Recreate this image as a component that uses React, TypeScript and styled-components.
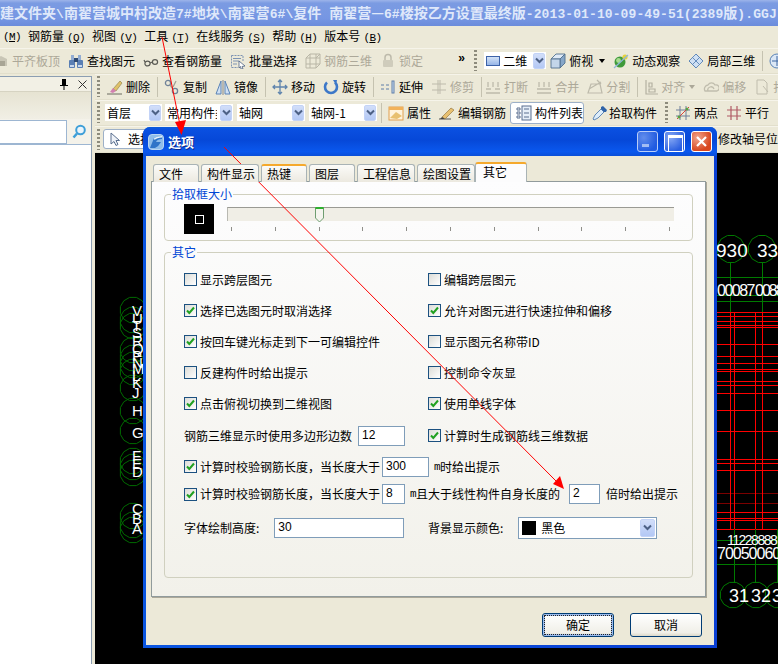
import React from "react";
import styled, { createGlobalStyle, css } from "styled-components";

const CJK = `"Noto Sans CJK SC", "Liberation Sans", sans-serif`;
const MONO = `"Liberation Mono", "Noto Sans CJK SC", monospace`;

const GlobalStyle = createGlobalStyle`
  html, body {
    margin: 0;
    padding: 0;
    overflow: hidden;
    background: #000;
  }
  * { box-sizing: border-box; }
`;

const icons: Record<string, React.ReactNode> = {
  level: (
    <>
      <path d="M2 13 L2 6 L8 3 L14 6 L14 13 Z" fill="#c9c6b6" />
      <rect x="4" y="8" width="8" height="5" fill="#a8a595" />
    </>
  ),
  find: (
    <>
      <rect x="1" y="7" width="6" height="8" rx="1" fill="#5a7fb4" />
      <rect x="9" y="7" width="6" height="8" rx="1" fill="#5a7fb4" />
      <rect x="3" y="2" width="3" height="5" fill="#93add3" />
      <rect x="10" y="2" width="3" height="5" fill="#93add3" />
      <rect x="6" y="5" width="4" height="4" fill="#2f4a73" />
      <rect x="2" y="12" width="4" height="2" fill="#c9d8ee" />
      <rect x="10" y="12" width="4" height="2" fill="#c9d8ee" />
    </>
  ),
  glasses: (
    <g fill="none" stroke="#5b5b55" strokeWidth="1.2">
      <ellipse cx="4.5" cy="10.5" rx="2.6" ry="2.4" />
      <ellipse cx="12" cy="9" rx="2.6" ry="2.4" />
      <path d="M7 10 L9.5 9 M2 9 L1 7" />
    </g>
  ),
  batch: (
    <g fill="none">
      <path d="M1.5 2.5 H13 V8 M1.5 2.5 V14.5 H8" stroke="#7d93b3" strokeDasharray="2 1" />
      <path d="M3 5.5 H11 M3 8 H9 M3 11 H7" stroke="#7d93b3" />
      <path d="M9 8 L15 13 L12 13.5 L13 16 L11 16 L10.5 13.5 L9 15 Z" fill="#fff" stroke="#4b5f80" strokeWidth="0.8" />
    </g>
  ),
  rebar3d: (
    <g fill="none" stroke="#b9b6a6">
      <path d="M1 5 H15 M1 11 H15 M5 1 V15 M11 1 V15 M1 5 L5 1 H15 L11 5 M1 11 V5 M15 1 V11 L11 15 H1 V11" />
    </g>
  ),
  lock: (
    <g>
      <path d="M5 7 V4.5 A3 3 0 0 1 11 4.5 V7" fill="none" stroke="#bdbaab" strokeWidth="1.5" />
      <rect x="3" y="7" width="10" height="7" rx="1" fill="#cfccbc" />
    </g>
  ),
  cube: (
    <g stroke="#50708f" strokeWidth="0.9">
      <path d="M1 6 L6 1 H15 L10 6 Z" fill="#dfeaf6" />
      <path d="M10 6 L15 1 V10 L10 15 Z" fill="#86a6c8" />
      <path d="M1 6 H10 V15 H1 Z" fill="#c3d6ea" />
    </g>
  ),
  orbit: (
    <g>
      <circle cx="7" cy="9" r="5.5" fill="#3f9a3a" />
      <circle cx="5.5" cy="7.5" r="2.4" fill="#a8dc8f" />
      <circle cx="12" cy="4" r="2.6" fill="#e6d23a" />
      <path d="M1 15 L15 2" stroke="#8fb4d8" strokeWidth="1.2" />
    </g>
  ),
  partial: (
    <g stroke="#5a83b6" strokeWidth="0.9">
      <path d="M1 8 L8 1 L15 8 L8 15 Z" fill="#cfe0f3" />
      <path d="M4.5 4.5 L11.5 11.5 M8 1 L15 8 M4.5 11.5 L11.5 4.5 M1 8 L8 15" fill="none" />
    </g>
  ),
  globe: (
    <g fill="none" stroke="#5a83b6">
      <circle cx="8" cy="8" r="7" fill="#dbe7f5" />
      <path d="M8 3 V13 M3 8 H13" stroke="#3a64a0" />
    </g>
  ),
  erase: (
    <g>
      <path d="M0 15 H15" stroke="#6b6b60" />
      <path d="M6 10 L13 2 L15 4 L9 12 Z" fill="#e0c26a" stroke="#8a7a44" strokeWidth="0.6" />
      <path d="M3 13 L6 9 L9 12 L6 14 Z" fill="#d27fb0" />
    </g>
  ),
  copy: (
    <g fill="none" stroke="#6f8299" strokeWidth="1.3">
      <circle cx="4" cy="4" r="2.6" />
      <circle cx="11" cy="12" r="2.6" />
      <path d="M6 6 L9 10 M12 2 L9 8" stroke="#a0a094" />
    </g>
  ),
  mirror: (
    <g stroke="#5a83b6" fill="#cfe0f3">
      <path d="M6 2 L6 15 L1 15 Z" />
      <path d="M10 2 L10 15 L15 15 Z" />
      <path d="M8 1 V16" stroke="#888" fill="none" />
    </g>
  ),
  move: (
    <g fill="none" stroke="#5f84ad" strokeWidth="1.3">
      <path d="M8 1 V15 M1 8 H15 M6 3 L8 1 L10 3 M6 13 L8 15 L10 13 M3 6 L1 8 L3 10 M13 6 L15 8 L13 10" />
    </g>
  ),
  rotate: (
    <g fill="none">
      <path d="M4 3.5 A6 6 0 1 0 12 3.5" stroke="#3d78c8" strokeWidth="2.6" />
      <path d="M10 1 L14 1 L13 6 Z" fill="#3d78c8" />
    </g>
  ),
  extend: (
    <g fill="none" stroke="#5f7fa8">
      <path d="M1 6 H4 M6 6 H9 M1 10 H4 M6 10 H9" />
      <rect x="12" y="2" width="2" height="12" fill="#cfe0f3" />
    </g>
  ),
  trim: <path d="M1 5 H15 M1 11 H15 M7 1 V15 M9 1 V15" fill="none" stroke="#bdbaab" />,
  breakLine: <path d="M1 10 H6 M10 10 H15 M1 14 H15 M3 3 V8 M8 3 V8 M13 3 V8" fill="none" stroke="#bdbaab" strokeWidth="1.3" />,
  merge: <path d="M1 10 H15 M1 14 H15 M3 3 V8 M8 3 V8 M13 3 V8" fill="none" stroke="#bdbaab" strokeWidth="1.3" />,
  split: <path d="M1 14 H15 L13 5 H4 Z M2 10 L14 3 M10 1 L14 5" fill="none" stroke="#bdbaab" strokeWidth="1.2" />,
  align: <path d="M2 1 V15 H14 M5 4 H8 V8 H5 Z M5 10 H11 V13 H5 Z" fill="none" stroke="#b4b1a1" strokeWidth="1.2" />,
  offset: <path d="M2 12 A4 4 0 0 1 5 6 A4 4 0 0 1 12 6 A3 3 0 0 1 14 12 Z M5 12 A3 3 0 0 1 11 10" fill="none" stroke="#c0bdad" strokeWidth="1.3" />,
  page: <path d="M3 1 H10 L13 4 V15 H3 Z M9 7 L14 13" fill="none" stroke="#c0bdad" />,
  props: (
    <g>
      <rect x="1" y="2" width="14" height="13" fill="#fff3dc" stroke="#e0a050" />
      <rect x="1" y="2" width="14" height="3" fill="#f2b25a" />
      <path d="M2 13 L8 7 L14 11 L9 14 Z" fill="#e8c070" />
    </g>
  ),
  pencil: (
    <g>
      <path d="M0 14 H12" stroke="#555" />
      <path d="M3 12 L12 3 L15 5 L6 14 Z" fill="#e8c070" stroke="#8a6a34" strokeWidth="0.6" />
      <path d="M3 12 L6 14 L1 14 Z" fill="#444" />
    </g>
  ),
  list: (
    <g>
      <rect x="6" y="1" width="9" height="14" fill="#e6eef8" stroke="#5a6f8f" />
      <path d="M8 4 H13 M8 8 H13 M8 12 H13" stroke="#5a6f8f" />
      <path d="M1 3 H4 V5 H1 Z M1 7 H4 V9 H1 Z M1 11 H4 V13 H1 Z" fill="none" stroke="#5a6f8f" />
    </g>
  ),
  dropper: (
    <g>
      <path d="M3 10 L9 4 L12 7 L6 13 L2 15 L1 14 Z" fill="#dcecfa" stroke="#3f6fa8" strokeWidth="0.8" />
      <path d="M9 2 L11 1 L15 5 L14 7 L12 7 L9 4 Z" fill="#2f63a8" />
    </g>
  ),
  twoPoint: (
    <g fill="none">
      <path d="M1 5 H15 M1 11 H15 M5 1 V15 M11 1 V15" stroke="#6f7f9a" />
      <path d="M2 14 L14 2" stroke="#d8443a" />
      <circle cx="4" cy="12" r="1.5" fill="#5aa040" />
      <circle cx="12" cy="4" r="1.5" fill="#5aa040" />
    </g>
  ),
  parallel: <path d="M1 5 H15 M1 11 H15 M5 1 V15 M11 1 V15" fill="none" stroke="#b05a64" strokeWidth="1.2" />,
};

const Glyph = styled.svg`
  flex: none;
  display: block;
  width: 16px;
  height: 16px;
`;

function Icon({ name }: { name: string }) {
  return <Glyph viewBox="0 0 16 16">{icons[name]}</Glyph>;
}

const Shell = styled.div`
  position: relative;
  width: 778px;
  height: 664px;
  overflow: hidden;
  display: flex;
  flex-direction: column;
  background: #ece9d8;
  font: 12px/16px ${CJK};
  color: #000;
`;

const TitleBar = styled.div`
  flex: none;
  height: 26px;
  padding: 3px 0 0 0;
  background: linear-gradient(#9db4ea 0, #7b9be2 12%, #7696e3 70%, #6b8cdb 100%);
  color: #dfe8fa;
  font: bold 14px/18px ${CJK};
  white-space: pre;
  overflow: hidden;
`;

const TitleAscii = styled.span`
  font: bold 13px/18px ${MONO};
  letter-spacing: 0.1px;
`;

const titleText =
  "建文件夹\\南翟营城中村改造7#地块\\南翟营6#\\复件 南翟营—6#楼按乙方设置最终版-2013-01-10-09-49-51(2389版).GGJ";

const MenuBar = styled.div`
  flex: none;
  height: 22px;
  display: flex;
  align-items: center;
  gap: 7px;
  white-space: nowrap;
`;

const Hotkey = styled.span`
  font: 11px/16px "Liberation Mono", monospace;
  letter-spacing: -0.6px;
  margin-left: 3px;
`;

const Bar = styled.div<{ $h: number; $start?: number }>`
  flex: none;
  height: ${(p) => p.$h}px;
  display: flex;
  align-items: center;
  gap: 8px;
  padding-left: ${(p) => p.$start ?? 0}px;
  white-space: nowrap;
  overflow: hidden;
  border-bottom: 1px solid #e2dfcc;
  box-shadow: inset 0 1px 0 #f6f4ea;
`;

const Item = styled.div<{ $off?: boolean; $tight?: boolean; $pushed?: boolean; $shift?: number }>`
  flex: none;
  display: flex;
  align-items: center;
  gap: ${(p) => (p.$tight ? 1 : 3)}px;
  color: ${(p) => (p.$off ? "#aca899" : "#000")};
  margin-left: ${(p) => p.$shift ?? 0}px;
  ${(p) =>
    p.$pushed &&
    css`
      height: 22px;
      padding: 0 0 0 5px;
      width: 74px;
      background: #fff;
      border: 1px solid #9db0c8;
      border-radius: 3px;
    `}
`;

function Tool(props: {
  icon: string;
  label: string;
  off?: boolean;
  tight?: boolean;
  pushed?: boolean;
  shift?: number;
  children?: React.ReactNode;
}) {
  return (
    <Item $off={props.off} $tight={props.tight} $pushed={props.pushed} $shift={props.shift}>
      <Icon name={props.icon} />
      <span>{props.label}</span>
      {props.children}
    </Item>
  );
}

const Grip = styled.div<{ $shift?: number }>`
  flex: none;
  width: 3px;
  height: 21px;
  margin: 0 -2px 0 ${(p) => p.$shift ?? 0}px;
  background: repeating-linear-gradient(#8d8b7c 0 2px, transparent 2px 4px);
`;

const Sep = styled.div<{ $shift?: number }>`
  flex: none;
  width: 1px;
  height: 20px;
  margin: 0 -2px 0 ${(p) => p.$shift ?? -1}px;
  background: #c5c2b0;
`;

const DropTri = styled.span`
  width: 0;
  height: 0;
  margin-left: 3px;
  border: 3px solid transparent;
  border-top: 4px solid ${(p) => p.color ?? "#000"};
  border-bottom: 0;
`;

const More = styled.span`
  font: bold 12px/10px "Liberation Mono", monospace;
  margin: -4px 0 0 27px;
`;

const Combo = styled.div<{ $w: number; $shift?: number }>`
  flex: none;
  width: ${(p) => p.$w}px;
  height: 17px;
  margin-left: ${(p) => p.$shift ?? 0}px;
  display: flex;
  align-items: center;
  gap: 3px;
  padding: 0 1px 0 2px;
  background: #fff;
  overflow: hidden;
`;

const ComboText = styled.span`
  flex: 1;
  min-width: 0;
  overflow: hidden;
`;

const ComboButton = styled.span<{ $big?: boolean }>`
  flex: none;
  width: ${(p) => (p.$big ? 15 : 12)}px;
  height: ${(p) => (p.$big ? 18 : 16)}px;
  display: flex;
  align-items: center;
  justify-content: center;
  border-radius: 2px;
  background: linear-gradient(#d2def9, #b3c8f5);
  border: 1px solid #c3d3f7;
`;

function Chevron() {
  return (
    <svg width="9" height="7" viewBox="0 0 9 7">
      <path d="M1 1.5 L4.5 5 L8 1.5" fill="none" stroke="#4d6185" strokeWidth="2" />
    </svg>
  );
}

const TwoD = styled.span`
  flex: none;
  width: 14px;
  height: 10px;
  background: linear-gradient(#d2e2f6, #97b6e8);
  border: 1px solid #3c62a8;
`;

const Workspace = styled.div`
  flex: 1;
  min-height: 0;
  display: flex;
`;

const LeftPanel = styled.div`
  flex: none;
  width: 92px;
  margin: 2px 3px 0 0;
  display: flex;
  flex-direction: column;
  border-right: 1px solid #8c9eb2;
`;

const PaneHead = styled.div`
  flex: none;
  height: 16px;
  display: flex;
  align-items: center;
  justify-content: flex-end;
  gap: 10px;
  padding-right: 4px;
  background: #f2f0e5;
  border-top: 1px solid #8c9eb2;
  border-bottom: 1px solid #d6d3c2;
`;

const PaneBand = styled.div`
  flex: none;
  height: 27px;
  background: linear-gradient(#e6e3d2, #f1efe5);
`;

const SearchRow = styled.div`
  flex: none;
  height: 25px;
  display: flex;
  align-items: center;
  gap: 5px;
  background: #f4f2ea;
`;

const SearchInput = styled.div`
  width: 67px;
  height: 24px;
  background: #fff;
  border: 1px solid #9db6d2;
  border-left: 0;
`;

const PaneList = styled.div`
  flex: 1;
  background: #fff;
  border-top: 1px solid #9db6d2;
`;

const RightColumn = styled.div`
  flex: 1;
  min-width: 0;
  display: flex;
  flex-direction: column;
`;

const PickButton = styled.div`
  flex: none;
  width: 60px;
  height: 20px;
  display: flex;
  align-items: center;
  gap: 8px;
  margin-left: -3px;
  padding-left: 6px;
  background: #fff;
  border: 1px solid #9db0c8;
  border-radius: 3px;
`;

const FarLabel = styled.span`
  margin-left: 547px;
`;

const Canvas = styled.div`
  flex: 1;
  min-height: 0;
  background: #000;
  overflow: hidden;
`;

const CadSvg = styled.svg`
  display: block;
  width: 683px;
  height: 511px;
`;

const CadText = styled.text`
  font-family: "Liberation Sans", sans-serif;
  fill: #fff;
`;

function gon(cx: number, cy: number, r: number) {
  const pts: string[] = [];
  for (let i = 0; i < 12; i++) {
    const a = (i * Math.PI) / 6 + Math.PI / 12;
    pts.push(`${(cx + r * Math.cos(a)).toFixed(1)},${(cy + r * Math.sin(a)).toFixed(1)}`);
  }
  return pts.join(" ");
}

const redH = [312, 316, 321, 325, 327, 344, 356, 363, 369, 371, 381, 385, 393, 410, 431, 459, 463, 470, 512, 518, 520, 529];
const darkH = [493, 503];
const redV = [730, 734, 755, 762];
const sideRings = [310, 320, 326, 350, 358, 365, 372, 388, 411, 431, 461, 467, 473, 516, 525, 530];
const sideLetters: [string, number][] = [
  ["V", 316], ["U", 324], ["T", 331], ["S", 338], ["R", 346], ["Q", 354], ["P", 361], ["N", 368],
  ["M", 374], ["L", 381], ["K", 388], ["J", 398], ["H", 416], ["G", 438],
  ["F", 461], ["E", 469], ["D", 477], ["C", 514], ["B", 524], ["A", 534],
];

function CadDrawing() {
  return (
    <CadSvg viewBox="95 153 683 511" shapeRendering="crispEdges">
      {sideRings.map((y) => (
        <polygon key={y} points={gon(133, y, 13)} fill="none" stroke="#006a00" shapeRendering="auto" />
      ))}
      {sideLetters.map(([t, y]) => (
        <CadText key={t} x={132} y={y} fontSize={15}>
          {t}
        </CadText>
      ))}

      {[277, 295, 301].map((y) => (
        <line key={y} x1={717} x2={778} y1={y} y2={y} stroke="#007a00" />
      ))}
      {[730.5, 762.5].map((x) => (
        <line key={x} x1={x} x2={x} y1={263} y2={312} stroke="#007a00" />
      ))}
      <polygon points={gon(731, 249, 14)} fill="none" stroke="#007a00" shapeRendering="auto" />
      <polygon points={gon(762, 249, 14)} fill="none" stroke="#007a00" shapeRendering="auto" />
      <CadText x={716} y={257} fontSize={19}>930</CadText>
      <CadText x={757} y={257} fontSize={19}>33</CadText>
      <CadText x={717} y={296} fontSize={16} letterSpacing={-1.5}>00087</CadText>
      <CadText x={755} y={296} fontSize={16} letterSpacing={-2}>00888</CadText>

      {redH.map((y) => (
        <line key={y} x1={717} x2={778} y1={y + 0.5} y2={y + 0.5} stroke="#f00" />
      ))}
      {darkH.map((y) => (
        <line key={y} x1={717} x2={778} y1={y + 0.5} y2={y + 0.5} stroke="#7a0000" />
      ))}
      {redV.map((x) => (
        <line key={x} x1={x + 0.5} x2={x + 0.5} y1={312} y2={529} stroke="#f00" />
      ))}

      {[540, 564].map((y) => (
        <line key={y} x1={717} x2={778} y1={y + 0.5} y2={y + 0.5} stroke="#007a00" />
      ))}
      {[734, 755, 777].map((x) => (
        <line key={x} x1={x + 0.5} x2={x + 0.5} y1={529} y2={583} stroke="#007a00" />
      ))}
      <polygon points={gon(733, 595, 13)} fill="none" stroke="#007a00" shapeRendering="auto" />
      <polygon points={gon(756, 595, 13)} fill="none" stroke="#007a00" shapeRendering="auto" />
      <polygon points={gon(778, 595, 13)} fill="none" stroke="#007a00" shapeRendering="auto" />
      <CadText x={727} y={545} fontSize={14} letterSpacing={-1.5}>11228888</CadText>
      <CadText x={717} y={559} fontSize={16} letterSpacing={-1}>700500600</CadText>
      <CadText x={729} y={602} fontSize={18}>31</CadText>
      <CadText x={751} y={602} fontSize={18}>32</CadText>
      <CadText x={772} y={602} fontSize={18}>3</CadText>
    </CadSvg>
  );
}

const Dialog = styled.div`
  position: absolute;
  left: 143px;
  top: 127px;
  width: 574px;
  height: 521px;
  display: flex;
  flex-direction: column;
  border-radius: 7px 7px 0 0;
  overflow: hidden;
  background: linear-gradient(90deg, #0a55e0, #0a3fd2);
`;

const DialogTitle = styled.div`
  flex: none;
  height: 29px;
  display: flex;
  align-items: center;
  gap: 4px;
  padding: 0 5px 0 5px;
  background: linear-gradient(#0a5cdc 0, #0a4fe0 10%, #0648d8 45%, #0a58ee 85%, #0a4fd8 100%);
  color: #fff;
  font: bold 13px/16px ${CJK};
  text-shadow: 1px 1px 0 #0a2a90;
`;

const TitleText = styled.span`
  flex: 1;
`;

const WinButton = styled.div<{ $kind: "min" | "max" | "close" }>`
  flex: none;
  width: 21px;
  height: 21px;
  margin-left: 2px;
  position: relative;
  border: 1px solid #fff;
  border-radius: 3px;
  background: ${(p) =>
    p.$kind === "close"
      ? "radial-gradient(circle at 30% 30%, #f0a48c, #d8471f 70%)"
      : "radial-gradient(circle at 30% 30%, #86a8f4, #2a5fe0 75%)"};
  opacity: ${(p) => (p.$kind === "min" ? 0.72 : 1)};
  &::after {
    content: "";
    position: absolute;
    ${(p) =>
      p.$kind === "min"
        ? css`
            left: 4px;
            top: 12px;
            width: 7px;
            height: 3px;
            background: #dfe8fa;
          `
        : p.$kind === "max"
        ? css`
            left: 3px;
            top: 3px;
            width: 13px;
            height: 13px;
            border: 1px solid #fff;
            border-top-width: 3px;
          `
        : ""}
  }
`;

const DialogBody = styled.div`
  flex: 1;
  min-height: 0;
  margin: 0 3px 3px;
  padding: 6px 8px 0 5px;
  background: #ece9d8;
  display: flex;
  flex-direction: column;
`;

const Tabs = styled.div`
  flex: none;
  height: 20px;
  display: flex;
  align-items: flex-end;
  gap: 2px;
  padding-left: 2px;
  position: relative;
  z-index: 1;
  margin-bottom: -1px;
`;

const Tab = styled.div<{ $hot?: boolean; $on?: boolean }>`
  min-width: 46px;
  height: 18px;
  padding: 0 3px 0 5px;
  line-height: 17px;
  background: linear-gradient(#fbfbf8, #ece9e0);
  border: 1px solid #a9b3b5;
  border-bottom: 0;
  border-radius: 3px 3px 0 0;
  ${(p) =>
    p.$hot &&
    css`
      border-top: 2px solid #f5a92c;
      line-height: 16px;
    `}
  ${(p) =>
    p.$on &&
    css`
      min-width: 52px;
      height: 20px;
      margin-left: -2px;
      padding: 0 0 0 7px;
      line-height: 15px;
      background: #fcfcfd;
      border-top: 2px solid #f5a92c;
    `}
`;

const Panel = styled.div`
  flex: none;
  height: 416px;
  padding: 4px 12px 0;
  background: linear-gradient(#fdfdfe, #f2f1ea);
  border: 1px solid #919b9c;
  box-shadow: 1px 1px 0 #aca899;
`;

const Group = styled.fieldset<{ $h: number; $top?: number }>`
  height: ${(p) => p.$h}px;
  margin: ${(p) => p.$top ?? 0}px 0 0;
  padding: 2px 19px 0;
  border: 1px solid #d0d0bf;
  border-radius: 4px;
  min-width: 0;
`;

const Legend = styled.legend`
  height: 16px;
  margin-left: -13px;
  padding: 0 1px;
  color: #0046d5;
  line-height: 16px;
`;

const PickRow = styled.div`
  display: flex;
  gap: 13px;
`;

const PickPreview = styled.div`
  flex: none;
  width: 30px;
  height: 30px;
  display: flex;
  align-items: center;
  justify-content: center;
  background: #000;
  &::after {
    content: "";
    width: 7px;
    height: 7px;
    border: 1px solid #fff;
  }
`;

const SliderWrap = styled.div`
  flex: 1;
  margin: 3px -1px 0 0;
  position: relative;
`;

const Track = styled.div`
  height: 14px;
  background: #f0eee6;
  border-top: 1px solid #9a9a94;
  border-left: 1px solid #b9b9b2;
`;

const Thumb = styled.svg`
  position: absolute;
  left: 88px;
  top: 0;
  width: 9px;
  height: 16px;
`;

const Ticks = styled.div`
  display: flex;
  justify-content: space-between;
  padding: 6px 4px 0;
`;

const Tick = styled.span`
  width: 1px;
  height: 4px;
  background: #8f8f8a;
`;

const OptionsGrid = styled.div`
  display: grid;
  grid-template-columns: 244px 1fr;
  grid-auto-rows: 31px;
  padding-top: 2px;
`;

const Row = styled.div<{ $h?: number }>`
  display: flex;
  align-items: center;
  white-space: nowrap;
  ${(p) => p.$h && `height: ${p.$h}px;`}
`;

const TwoCols = styled.div<{ $h: number }>`
  display: grid;
  grid-template-columns: 244px 1fr;
  height: ${(p) => p.$h}px;
`;

const Box = styled.span`
  flex: none;
  width: 13px;
  height: 13px;
  margin-right: 3px;
  display: flex;
  align-items: center;
  justify-content: center;
  border: 1px solid #1c5180;
  background: linear-gradient(135deg, #dcdcd7, #ffffff);
`;

function Check({ label, on }: { label: string; on?: boolean }) {
  return (
    <Row>
      <Box>
        {on && (
          <svg width="9" height="9" viewBox="0 0 9 9">
            <path d="M1 4.5 L3.3 7 L8 1.5" fill="none" stroke="#21a121" strokeWidth="2" />
          </svg>
        )}
      </Box>
      {label}
    </Row>
  );
}

const Field = styled.div<{ $w: number; $before?: number; $after?: number }>`
  flex: none;
  width: ${(p) => p.$w}px;
  height: 20px;
  margin: 0 ${(p) => p.$after ?? 0}px 0 ${(p) => p.$before ?? 0}px;
  padding-left: 3px;
  background: #fff;
  border: 1px solid #7f9db9;
  font: 12px/16px "Liberation Sans", sans-serif;
`;

const Unit = styled.span`
  font: 11px/16px "Liberation Mono", monospace;
  letter-spacing: -0.6px;
  color: #000;
`;

const ColorSelect = styled.div`
  flex: none;
  width: 139px;
  height: 22px;
  margin-left: 15px;
  display: flex;
  align-items: center;
  gap: 5px;
  padding: 0 1px 0 3px;
  background: #fff;
  border: 1px solid #7f9db9;
`;

const Swatch = styled.span`
  flex: none;
  width: 14px;
  height: 14px;
  background: #000;
`;

const Footer = styled.div`
  flex: none;
  display: flex;
  justify-content: flex-end;
  gap: 16px;
  padding: 16px 4px 0 0;
`;

const PushButton = styled.div<{ $default?: boolean }>`
  width: 72px;
  height: 24px;
  display: flex;
  align-items: center;
  justify-content: center;
  background: linear-gradient(#ffffff, #f0efe8 85%, #dcd8c8);
  border: 1px solid #003c74;
  border-radius: 3px;
  ${(p) =>
    p.$default &&
    css`
      box-shadow: inset 0 0 0 2px #9dbcec;
      outline: 1px dotted #222;
      outline-offset: -3px;
    `}
`;

const Overlay = styled.svg`
  position: absolute;
  left: 0;
  top: 0;
  width: 778px;
  height: 664px;
  pointer-events: none;
`;

const menuItems: [string, string][] = [
  ["钢筋量", "Q"],
  ["视图", "V"],
  ["工具", "T"],
  ["在线服务", "S"],
  ["帮助", "H"],
  ["版本号", "B"],
];

const tabNames = ["文件", "构件显示", "热键", "图层", "工程信息", "绘图设置", "其它"];
const ticks = Array.from({ length: 11 }, (_, i) => i);

const optionRows: [string, boolean, string, boolean][] = [
  ["显示跨层图元", false, "编辑跨层图元", false],
  ["选择已选图元时取消选择", true, "允许对图元进行快速拉伸和偏移", true],
  ["按回车键光标走到下一可编辑控件", true, "显示图元名称带ID", false],
  ["反建构件时给出提示", false, "控制命令灰显", false],
  ["点击俯视切换到二维视图", true, "使用单线字体", true],
];

export default function App() {
  return (
    <>
      <GlobalStyle />
      <Shell>
        <TitleBar>
          {titleText.split(/([\x00-\x7f]+)/).map((part, i) =>
            i % 2 ? <TitleAscii key={i}>{part}</TitleAscii> : part
          )}
        </TitleBar>
        <MenuBar>
          <Hotkey>(<u>M</u>)</Hotkey>
          {menuItems.map(([name, key]) => (
            <span key={key}>
              {name}
              <Hotkey>(<u>{key}</u>)</Hotkey>
            </span>
          ))}
        </MenuBar>
        <Bar $h={26}>
          <Tool icon="level" label="平齐板顶" off shift={-7} />
          <Tool icon="find" label="查找图元" />
          <Tool icon="glasses" label="查看钢筋量" />
          <Tool icon="batch" label="批量选择" />
          <Tool icon="rebar3d" label="钢筋三维" off />
          <Tool icon="lock" label="锁定" off />
          <More>»</More>
          <Grip $shift={1} />
          <Combo $w={62} $shift={1}>
            <TwoD />
            <ComboText>二维</ComboText>
            <ComboButton><Chevron /></ComboButton>
          </Combo>
          <Tool icon="cube" label="俯视" shift={-4}>
            <DropTri />
          </Tool>
          <Tool icon="orbit" label="动态观察" />
          <Tool icon="partial" label="局部三维" />
          <Sep />
          <Icon name="globe" />
        </Bar>
        <Workspace>
          <LeftPanel>
            <PaneHead>
              <svg width="8" height="11" viewBox="0 0 8 11">
                <path d="M2 0 H6 V6 H8 V7 H4.5 V11 H3.5 V7 H0 V6 H2 Z" fill="#000" />
              </svg>
              <svg width="9" height="9" viewBox="0 0 9 9">
                <path d="M0.5 0.5 L8.5 8.5 M8.5 0.5 L0.5 8.5" stroke="#333" fill="none" />
              </svg>
            </PaneHead>
            <PaneBand />
            <SearchRow>
              <SearchInput />
              <svg width="15" height="15" viewBox="0 0 15 15">
                <circle cx="8.5" cy="6" r="4.3" fill="#eaf4fb" stroke="#3f9fd8" strokeWidth="2" />
                <path d="M5 9.5 L1.5 13.5" stroke="#3f9fd8" strokeWidth="2.5" />
              </svg>
            </SearchRow>
            <PaneList />
          </LeftPanel>
          <RightColumn>
            <Bar $h={26} $start={2}>
              <Grip />
              <Tool icon="erase" label="删除" shift={1} />
              <Sep />
              <Tool icon="copy" label="复制" />
              <Tool icon="mirror" label="镜像" />
              <Sep />
              <Tool icon="move" label="移动" />
              <Tool icon="rotate" label="旋转" />
              <Sep />
              <Tool icon="extend" label="延伸" />
              <Tool icon="trim" label="修剪" off />
              <Sep />
              <Tool icon="breakLine" label="打断" off shift={-3} />
              <Tool icon="merge" label="合并" off />
              <Tool icon="split" label="分割" off />
              <Sep />
              <Tool icon="align" label="对齐" off tight>
                <DropTri color="#aca899" />
              </Tool>
              <Tool icon="offset" label="偏移" off />
              <Tool icon="page" label="打印" off />
            </Bar>
            <Bar $h={26} $start={2}>
              <Grip />
              <Combo $w={57} $shift={-1}>
                <ComboText>首层</ComboText>
                <ComboButton><Chevron /></ComboButton>
              </Combo>
              <Combo $w={68} $shift={-5}>
                <ComboText>常用构件类型</ComboText>
                <ComboButton><Chevron /></ComboButton>
              </Combo>
              <Combo $w={68} $shift={-4}>
                <ComboText>轴网</ComboText>
                <ComboButton><Chevron /></ComboButton>
              </Combo>
              <Combo $w={68} $shift={-4}>
                <ComboText>轴网-1</ComboText>
                <ComboButton><Chevron /></ComboButton>
              </Combo>
              <Sep $shift={-4} />
              <Tool icon="props" label="属性" />
              <Tool icon="pencil" label="编辑钢筋" />
              <Tool icon="list" label="构件列表" pushed shift={-4} />
              <Tool icon="dropper" label="拾取构件" tight />
              <Grip />
              <Tool icon="twoPoint" label="两点" shift={1} />
              <Tool icon="parallel" label="平行" />
            </Bar>
            <Bar $h={27} $start={2}>
              <Grip />
              <PickButton>
                <svg width="10" height="14" viewBox="0 0 10 14">
                  <path d="M1 1 L1 12 L4 9.5 L6 13.5 L8 12.5 L6 8.5 L9.5 8.5 Z" fill="#eef2f8" stroke="#5a6f8f" />
                </svg>
                选择
              </PickButton>
              <FarLabel>修改轴号位置</FarLabel>
            </Bar>
            <Canvas>
              <CadDrawing />
            </Canvas>
          </RightColumn>
        </Workspace>

        <Dialog>
          <DialogTitle>
            <svg width="16" height="16" viewBox="0 0 16 16">
              <rect x="0.5" y="0.5" width="15" height="15" rx="3.5" fill="#8fbdea" stroke="#b9d6f2" />
              <path d="M2 14 L6 4 Q10 2 14 2 L14 5 Q9 5 8 8 L13 8 Q11 12 7 14 Z" fill="#2f74c8" />
              <path d="M6 4 Q10 2 14 2 L14 3.5 Q9 3.5 6.5 6 Z" fill="#eaf4fc" />
            </svg>
            <TitleText>选项</TitleText>
            <WinButton $kind="min" />
            <WinButton $kind="max" />
            <WinButton $kind="close">
              <svg width="19" height="19" viewBox="0 0 19 19">
                <path d="M5 5 L14 14 M14 5 L5 14" stroke="#fff" strokeWidth="2.2" />
              </svg>
            </WinButton>
          </DialogTitle>
          <DialogBody>
            <Tabs>
              {tabNames.map((name, i) => (
                <Tab key={name} $hot={i === 2} $on={i === 6}>
                  {name}
                </Tab>
              ))}
            </Tabs>
            <Panel>
              <Group $h={55}>
                <Legend>拾取框大小</Legend>
                <PickRow>
                  <PickPreview />
                  <SliderWrap>
                    <Track />
                    <Thumb viewBox="0 0 9 16">
                      <path d="M0.5 0.5 H8.5 V11 L4.5 15 L0.5 11 Z" fill="#f4f4ee" stroke="#6f9d70" />
                      <path d="M0.5 1 H8.5" stroke="#2fb02f" strokeWidth="2" />
                    </Thumb>
                    <Ticks>
                      {ticks.map((t) => (
                        <Tick key={t} />
                      ))}
                    </Ticks>
                  </SliderWrap>
                </PickRow>
              </Group>
              <Group $h={334} $top={3}>
                <Legend>其它</Legend>
                <OptionsGrid>
                  {optionRows.map(([a, aOn, b, bOn]) => (
                    <React.Fragment key={a}>
                      <Check label={a} on={aOn} />
                      <Check label={b} on={bOn} />
                    </React.Fragment>
                  ))}
                </OptionsGrid>
                <TwoCols $h={33}>
                  <Row>
                    钢筋三维显示时使用多边形边数
                    <Field $w={47} $before={6}>12</Field>
                  </Row>
                  <Check label="计算时生成钢筋线三维数据" on />
                </TwoCols>
                <Row $h={29}>
                  <Check label="计算时校验钢筋长度，当长度大于" on />
                  <Field $w={47} $before={2} $after={5}>300</Field>
                  <Unit>m</Unit>时给出提示
                </Row>
                <Row $h={26}>
                  <Check label="计算时校验钢筋长度，当长度大于" on />
                  <Field $w={23} $before={2} $after={5}>8</Field>
                  <Unit>m</Unit>且大于线性构件自身长度的
                  <Field $w={31} $before={9} $after={6}>2</Field>
                  倍时给出提示
                </Row>
                <TwoCols $h={41}>
                  <Row>
                    字体绘制高度:
                    <Field $w={130} $before={15}>30</Field>
                  </Row>
                  <Row>
                    背景显示颜色:
                    <ColorSelect>
                      <Swatch />
                      <ComboText>黑色</ComboText>
                      <ComboButton $big><Chevron /></ComboButton>
                    </ColorSelect>
                  </Row>
                </TwoCols>
              </Group>
            </Panel>
            <Footer>
              <PushButton $default>确定</PushButton>
              <PushButton>取消</PushButton>
            </Footer>
          </DialogBody>
        </Dialog>

        <Overlay viewBox="0 0 778 664">
          <line x1="162" y1="37" x2="180" y2="125" stroke="#f00" />
          <path d="M181.5 135 L175 122 L186 120 Z" fill="#f00" />
          <line x1="224" y1="147" x2="556" y2="481" stroke="#f00" />
          <path d="M564 489 L553 484 L560 476 Z" fill="#f00" />
        </Overlay>
      </Shell>
    </>
  );
}
